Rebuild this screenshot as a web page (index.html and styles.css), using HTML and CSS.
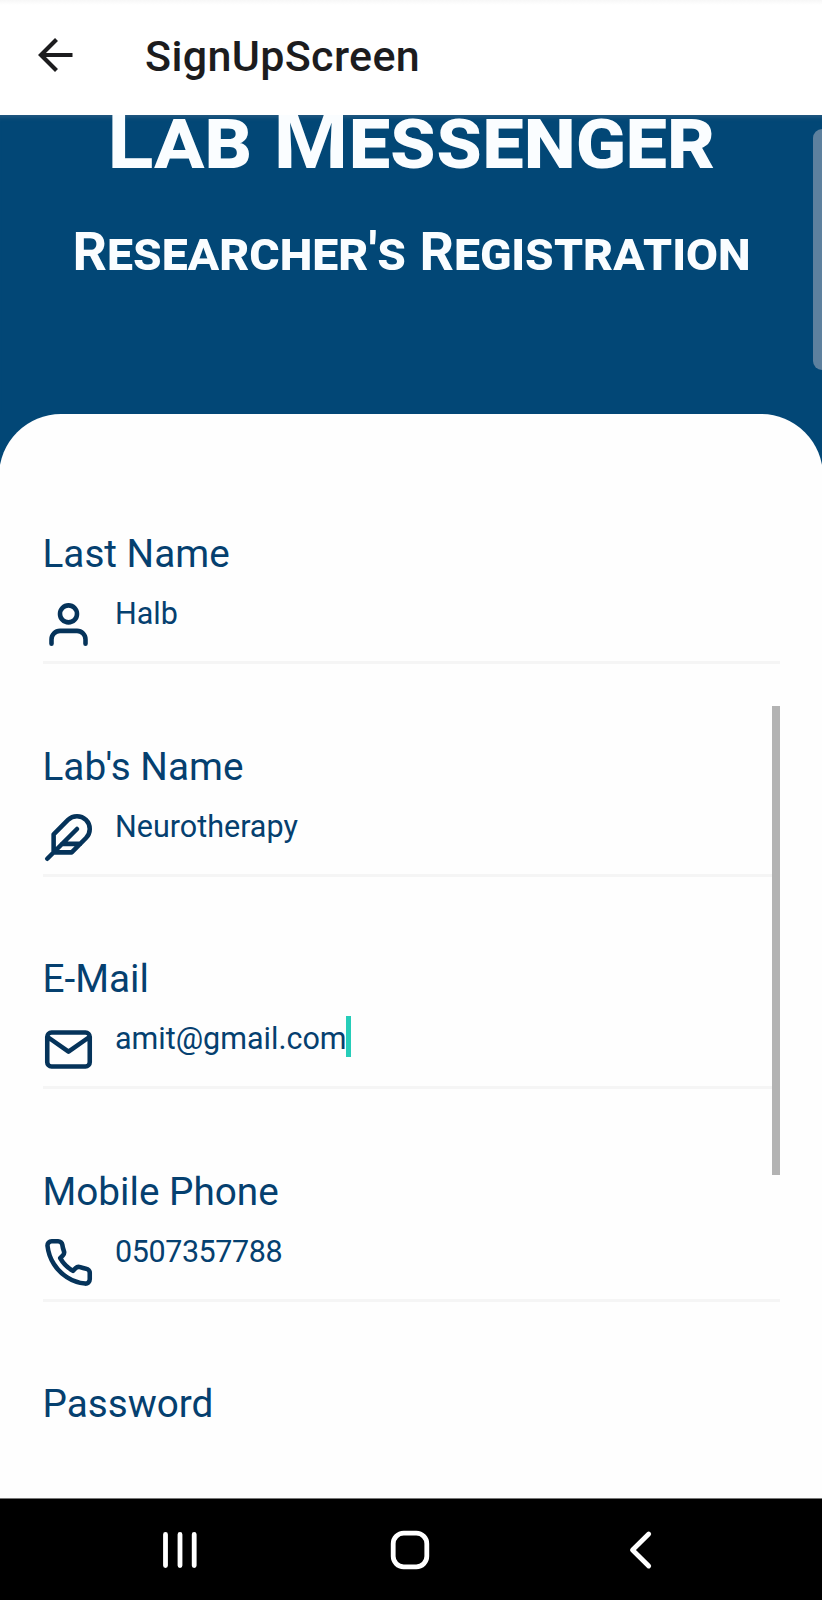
FILE: index.html
```html
<!DOCTYPE html>
<html lang="en">
<head>
<meta charset="utf-8">
<title>SignUpScreen</title>
<link rel="stylesheet" href="styles.css">
</head>
<body>
<div class="screen">
  <header class="app-bar">
    <svg class="back" width="36" height="36" viewBox="0 0 36 36"><path d="M34.500 18H2.500M18.500 2.500L3 18L18.500 33.500"/></svg>
    <h1 class="app-title">SignUpScreen</h1>
  </header>
  <main class="content">
    <section class="hero">
      <div class="brand">Lab Messenger</div>
      <div class="subtitle">Researcher's Registration</div>
    </section>
    <form class="card">
      <div class="field">
        <label class="label">Last Name</label>
        <div class="row">
          <svg class="icon" viewBox="0 0 24 24"><path d="M20 21v-2a4 4 0 0 0-4-4H8a4 4 0 0 0-4 4v2"/><circle cx="12" cy="7" r="4"/></svg>
          <span class="value">Halb</span>
        </div>
      </div>
      <div class="field">
        <label class="label">Lab's Name</label>
        <div class="row">
          <svg class="icon" viewBox="0 0 24 24"><path d="M20.240 12.240a6 6 0 0 0-8.490-8.490L5 10.500V19h8.500zM16 8L2 22M17.500 15H9"/></svg>
          <span class="value">Neurotherapy</span>
        </div>
      </div>
      <div class="field">
        <label class="label">E-Mail</label>
        <div class="row">
          <svg class="icon" viewBox="0 0 24 24"><path d="M4 4h16c1.100 0 2 .9 2 2v12c0 1.100-.9 2-2 2H4c-1.100 0-2-.9-2-2V6c0-1.100.9-2 2-2zM22 6l-10 7L2 6"/></svg>
          <span class="value">amit@gmail.com</span><span class="caret"></span>
        </div>
      </div>
      <div class="field">
        <label class="label">Mobile Phone</label>
        <div class="row">
          <svg class="icon" viewBox="0 0 24 24"><path d="M22 16.920v3a2 2 0 0 1-2.180 2 19.790 19.790 0 0 1-8.630-3.070 19.500 19.500 0 0 1-6-6 19.790 19.790 0 0 1-3.070-8.670A2 2 0 0 1 4.110 2h3a2 2 0 0 1 2 1.720 12.840 12.840 0 0 0 .7 2.810 2 2 0 0 1-.45 2.110L8.090 9.910a16 16 0 0 0 6 6l1.270-1.270a2 2 0 0 1 2.110-.45 12.840 12.840 0 0 0 2.810.7A2 2 0 0 1 22 16.920z"/></svg>
          <span class="value digits">0507357788</span>
        </div>
      </div>
      <div class="field">
        <label class="label">Password</label>
      </div>
      <div class="form-scrollbar"></div>
    </form>
    <div class="edge-handle"></div>
  </main>
  <nav class="nav-bar">
    <svg width="40" height="40" viewBox="0 0 40 40"><path d="M5.500 4.500v31M20 4.500v31M34.200 4.500v31"/></svg>
    <svg width="40" height="40" viewBox="0 0 40 40"><rect x="3.200" y="3.200" width="33.600" height="33.600" rx="10.500"/></svg>
    <svg width="40" height="40" viewBox="0 0 40 40"><path d="M28.700 4L12.500 20L28.700 36"/></svg>
  </nav>
</div>
</body>
</html>
```

FILE: styles.css
```css
* { box-sizing: border-box; }
body { margin: 0; font-family: Roboto, "Liberation Sans", sans-serif; background: #fff; }
.screen { width: 822px; height: 1600px; display: flex; flex-direction: column; overflow: hidden; }

.app-bar {
  height: 115px; flex: none; display: flex; align-items: center;
  padding: 0 38px; background: linear-gradient(#f7f7f7, #fff 5px);
}
.back { margin: -5px 0 0 -.5px; fill: none; stroke: #1c1c1e; stroke-width: 4.2; }
.app-title { margin: -3px 0 0 71.500px; font-size: 43px; line-height: 56px; font-weight: 500; letter-spacing: .35px; color: #1c1c1e; white-space: nowrap; }

.content { position: relative; height: 1383px; flex: none; background: #024776; overflow: hidden; }
.hero { height: 299px; overflow: hidden; color: #fafdff; font-weight: 700; text-align: center; white-space: nowrap; font-variant-caps: small-caps; box-shadow: inset 0 6px 5px -4px #2a5c82; }
.brand { height: 100px; margin-top: -26px; line-height: 100px; font-size: 86px; }
.subtitle { margin: 27.500px 0 0 1px; height: 70px; line-height: 70px; font-size: 53.900px; }

.card {
  position: relative; height: 1084px; margin: 0 -1px; padding: 115px 43px 0 43.500px;
  display: flex; flex-direction: column; gap: 77px; overflow: hidden;
  background: #fefefe; border-radius: 62px 62px 0 0;
}
.field { display: flex; flex-direction: column; align-items: flex-start; flex: none; height: 135.500px; color: #05406f; }
.label { font-size: 38.700px; line-height: 50px; height: 50px; white-space: nowrap; }
.row { width: 100%; height: 85px; display: flex; align-items: flex-start; padding-top: 15px; border-bottom: 3px solid #f5f5f5; }
.icon { width: 51px; height: 51px; margin: 5px -.5px 0 0; flex: none; fill: none; stroke: #05335a; stroke-width: 2.15; stroke-linecap: round; stroke-linejoin: round; }
.value { margin-left: 22px; font-size: 30.500px; line-height: 40px; white-space: nowrap; }
.digits { letter-spacing: -.42px; }
.caret { width: 5px; height: 41px; margin: -3px 0 0 -.5px; background: #26cdb9; }
.form-scrollbar { position: absolute; top: 292px; right: 43px; width: 8px; height: 469px; background: #b3b3b3; }
.edge-handle { position: absolute; top: 14px; right: 0; width: 9px; height: 241px; border-radius: 9px 0 0 9px; background: #5d809e; }

.nav-bar {
  height: 102px; flex: none; display: flex; justify-content: space-between; align-items: center;
  padding: 0 162px 0 160px; background: #000; border-top: 1px solid #777;
}
.nav-bar svg { fill: none; stroke: #fff; stroke-width: 4.8; stroke-linecap: round; stroke-linejoin: round; }
```
